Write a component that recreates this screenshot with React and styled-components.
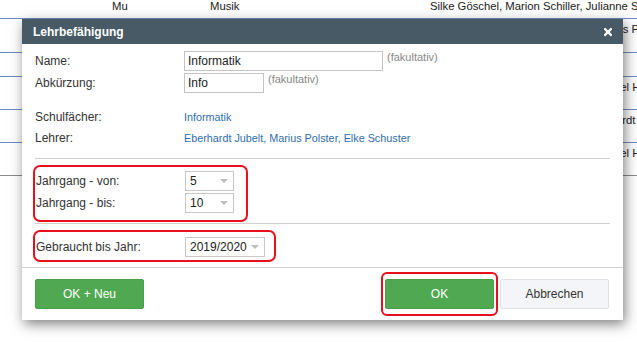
import React from 'react';
import styled, { createGlobalStyle } from 'styled-components';
import { FaTimes } from 'react-icons/fa';

const GlobalStyle = createGlobalStyle`
  html, body {
    margin: 0;
    padding: 0;
    background: #fff;
  }
  body {
    font-family: "Liberation Sans", Arial, sans-serif;
    font-size: 12px;
    color: #333;
  }
`;

// Tabelle im Hintergrund
const BG_ROWS = [
  { h: 19, cells: ['Mu', 'Musik', 'Silke Göschel, Marion Schiller, Julianne Sievers'] },
  { h: 34, cells: ['', '', 'Eberhardt Jubelt, Elke Schuster, Marius Polster'] },
  { h: 24, cells: ['', '', ''] },
  { h: 33, cells: ['', '', 'Eberhardt Jubelt, Marius Polster, Daniel Hoffmann'] },
  { h: 33, cells: ['', '', 'Marion Schiller, Elke Schuster, Eberhardt Jubelt'] },
  { h: 33, cells: ['', '', 'Eberhardt Jubelt, Marius Polster, Daniel Hoffmann'], last: true },
];

const Page = styled.div`
  position: relative;
  width: 637px;
  height: 356px;
  overflow: hidden;
`;

const BgTable = styled.div`
  display: flex;
  flex-direction: column;
`;

const BgRow = styled.div`
  display: grid;
  grid-template-columns: 98px 220px auto;
  padding-left: 112px;
  padding-top: ${p => (p.first ? 0 : 4)}px;
  height: ${p => p.h}px;
  box-sizing: border-box;
  border-bottom: 1px solid ${p => (p.last ? '#8a8a8a' : '#6e8cc4')};
  white-space: nowrap;
  font-size: 11.3px;
  line-height: 13px;
  color: #222;
`;

const Dialog = styled.div`
  position: absolute;
  left: 22px;
  top: 19px;
  width: 601px;
  background: #fff;
  box-shadow: 2px 4px 12px rgba(0, 0, 0, 0.5);
  display: flex;
  flex-direction: column;
`;

const Header = styled.div`
  height: 25px;
  background: #475a65;
  display: flex;
  align-items: center;
  justify-content: space-between;
  padding: 0 9px 0 11px;
  color: #fff;
`;

const Title = styled.div`
  font-size: 12px;
  font-weight: bold;
`;

const Body = styled.div`
  padding: 7px 13px 5px 13px;
  display: flex;
  flex-direction: column;
`;

const FieldRow = styled.div`
  display: grid;
  grid-template-columns: 149px auto 1fr;
  align-items: center;
  height: ${p => p.h || 20}px;
  margin-bottom: ${p => p.mb || 0}px;
  margin-top: ${p => p.mt || 0}px;
`;

const Label = styled.div`
  font-size: 12px;
  color: #333;
`;

const Input = styled.div`
  width: ${p => p.w}px;
  height: 20px;
  box-sizing: border-box;
  border: 1px solid #c4c4c4;
  padding-left: 3px;
  font-size: 12px;
  line-height: 18px;
  color: #222;
`;

const Hint = styled.span`
  align-self: start;
  margin-left: 4px;
  font-size: 11px;
  line-height: 12px;
  color: #888;
`;

const Value = styled.div`
  font-size: 10.8px;
  color: #2f6eab;
`;

const Separator = styled.div`
  height: 1px;
  background: #d0d0d0;
  margin-top: ${p => p.mt || 0}px;
`;

const Marked = styled.div`
  width: ${p => p.w}px;
  margin-left: -2px;
  margin-top: 6px;
  padding: ${p => p.pad};
  border: 2px solid #e8101c;
  border-radius: 7px;
  display: flex;
  flex-direction: column;
  gap: 2px;
`;

const MarkedRow = styled.div`
  display: grid;
  grid-template-columns: 149px auto;
  align-items: center;
  height: 20px;
  padding-left: 1px;
`;

const Select = styled.div`
  position: relative;
  width: ${p => p.w}px;
  height: 20px;
  box-sizing: border-box;
  border: 1px solid #c8c8c8;
  padding-left: 4px;
  font-size: 12px;
  line-height: 18px;
  color: #222;

  &::after {
    content: '';
    position: absolute;
    right: 5px;
    top: 7px;
    border-left: 4px solid transparent;
    border-right: 4px solid transparent;
    border-top: 4px solid #bdbdbd;
  }
`;

const Footer = styled.div`
  border-top: 1px solid #d0d0d0;
  padding: 11px 14px 11px 13px;
  display: flex;
  align-items: center;
  gap: 6px;
`;

const Spacer = styled.div`
  flex: 1;
`;

const Button = styled.button`
  position: relative;
  width: 109px;
  height: 30px;
  border-radius: 2px;
  font-family: "Liberation Sans", Arial, sans-serif;
  font-size: 12px;
  cursor: pointer;
  background: ${p => (p.primary ? '#50a952' : '#f4f5f8')};
  border: 1px solid ${p => (p.primary ? '#48a04a' : '#dfe1e6')};
  color: ${p => (p.primary ? '#fff' : '#333')};

  ${p => p.marked && `
    &::after {
      content: '';
      position: absolute;
      left: -5px;
      right: -5px;
      top: -8px;
      bottom: -8px;
      border: 2px solid #e8101c;
      border-radius: 6px;
    }
  `}
`;

export default function App() {
  return (
    <Page>
      <GlobalStyle />
      <BgTable>
        {BG_ROWS.map((row, i) => (
          <BgRow key={i} h={row.h} first={i === 0} last={row.last}>
            {row.cells.map((c, j) => (
              <span key={j}>{c}</span>
            ))}
          </BgRow>
        ))}
      </BgTable>

      <Dialog>
        <Header>
          <Title>Lehrbefähigung</Title>
          <FaTimes size={12} />
        </Header>

        <Body>
          <FieldRow mb={2}>
            <Label>Name:</Label>
            <Input w={199}>Informatik</Input>
            <Hint>(fakultativ)</Hint>
          </FieldRow>
          <FieldRow>
            <Label>Abkürzung:</Label>
            <Input w={80}>Info</Input>
            <Hint>(fakultativ)</Hint>
          </FieldRow>

          <FieldRow h={21} mt={13}>
            <Label>Schulfächer:</Label>
            <Value>Informatik</Value>
          </FieldRow>
          <FieldRow h={21}>
            <Label>Lehrer:</Label>
            <Value>Eberhardt Jubelt, Marius Polster, Elke Schuster</Value>
          </FieldRow>

          <Separator mt={10} />

          <Marked w={211} pad="4px 0 7px 0">
            <MarkedRow>
              <Label>Jahrgang - von:</Label>
              <Select w={49}>5</Select>
            </MarkedRow>
            <MarkedRow>
              <Label>Jahrgang - bis:</Label>
              <Select w={49}>10</Select>
            </MarkedRow>
          </Marked>

          <Separator mt={1} />

          <Marked w={239} pad="5px 0 3px 0">
            <MarkedRow>
              <Label>Gebraucht bis Jahr:</Label>
              <Select w={80}>2019/2020</Select>
            </MarkedRow>
          </Marked>
        </Body>

        <Footer>
          <Button primary>OK + Neu</Button>
          <Spacer />
          <Button primary marked>OK</Button>
          <Button>Abbrechen</Button>
        </Footer>
      </Dialog>
    </Page>
  );
}
